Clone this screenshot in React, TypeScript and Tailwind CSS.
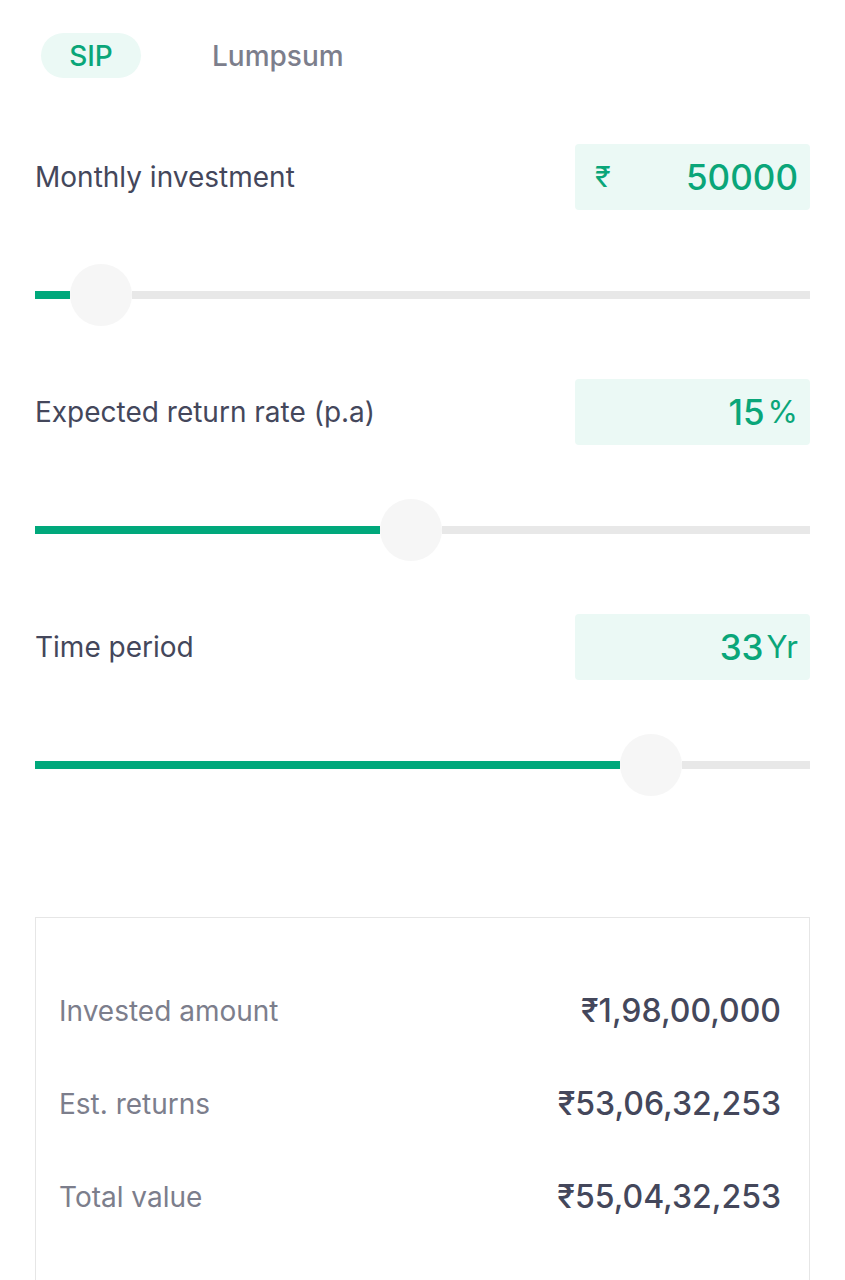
import React from 'react';

const font = { fontFamily: 'Inter, "Noto Sans", "DejaVu Sans", sans-serif' };

interface SliderRowProps {
  label: string;
  value: string;
  prefix?: string;
  suffix?: string;
  fill: number;
}

const SliderRow: React.FC<SliderRowProps> = ({ label, value, prefix, suffix, fill }) => {
  return (
    <div className="flex flex-col">
      <div className="flex items-center justify-between">
        <span className="text-[28px] text-[#44475b]">{label}</span>
        <div className="flex h-[66px] w-[235px] items-center rounded-[4px] bg-[#ebf9f5] pl-[20px] pr-[12px] text-[#0aa679]">
          {prefix && <span className="text-[29px]">{prefix}</span>}
          <span className="ml-auto text-[35px] font-medium">{value}</span>
          {suffix && <span className="ml-[3px] text-[31px]">{suffix}</span>}
        </div>
      </div>
      <div className="mt-[54px] mb-[53px] flex h-[62px] items-center">
        <div className="h-[8px] bg-[#00a87b]" style={{ width: fill }} />
        <div className="h-[62px] w-[62px] shrink-0 rounded-full bg-[#f6f6f6]" />
        <div className="h-[8px] flex-1 bg-[#e8e8e8]" />
      </div>
    </div>
  );
};

const ResultRow: React.FC<{ label: string; value: string }> = ({ label, value }) => (
  <div className="flex h-[93px] items-center justify-between">
    <span className="text-[28px] text-[#7c7e8c]">{label}</span>
    <span className="text-[32px] font-medium text-[#44475b]">{value}</span>
  </div>
);

export default function App() {
  return (
    <div className="min-h-screen bg-white px-[35px] pt-[33px]" style={font}>
      <div className="flex items-center">
        <div className="ml-[6px] flex h-[45px] w-[100px] items-center justify-center rounded-full bg-[#ebf9f5] text-[28px] font-medium text-[#0aa679]">
          SIP
        </div>
        <div className="ml-[71px] text-[28px] font-medium text-[#7c7e8c]">Lumpsum</div>
      </div>

      <div className="mt-[66px] flex flex-col">
        <SliderRow label="Monthly investment" prefix="₹" value="50000" fill={35} />
        <SliderRow label="Expected return rate (p.a)" value="15" suffix="%" fill={345} />
        <SliderRow label="Time period" value="33" suffix="Yr" fill={585} />
      </div>

      <div className="mt-[68px] h-[400px] border border-[#e6e6e6] pl-[23px] pr-[28px] pt-[46px]">
        <ResultRow label="Invested amount" value="₹1,98,00,000" />
        <ResultRow label="Est. returns" value="₹53,06,32,253" />
        <ResultRow label="Total value" value="₹55,04,32,253" />
      </div>
    </div>
  );
}
